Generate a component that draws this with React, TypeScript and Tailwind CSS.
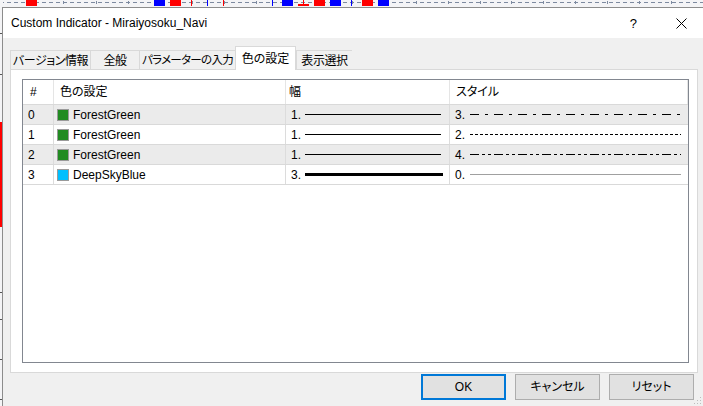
import React from "react";

type Row = {
  id: number;
  color: string;
  name: string;
  width: number;
  style: number;
  dash: string;
};

const rows: Row[] = [
  { id: 0, color: "#228b22", name: "ForestGreen", width: 1, style: 3, dash: "9 6 3 6" },
  { id: 1, color: "#228b22", name: "ForestGreen", width: 1, style: 2, dash: "3 2" },
  { id: 2, color: "#228b22", name: "ForestGreen", width: 1, style: 4, dash: "9 3 3 3 3 3" },
  { id: 3, color: "#00bfff", name: "DeepSkyBlue", width: 3, style: 0, dash: "" },
];

const markers = [
  { x: 26, w: 11, c: "#ff0000", y: 0 },
  { x: 154, w: 11, c: "#0000ff", y: 0 },
  { x: 170, w: 11, c: "#ff0000", y: 0 },
  { x: 191, w: 1, c: "#ff0000", y: 0 },
  { x: 207, w: 1, c: "#0000ff", y: 0 },
  { x: 223, w: 1, c: "#ff0000", y: 0 },
  { x: 272, w: 1, c: "#0000ff", y: 0 },
  { x: 282, w: 11, c: "#0000ff", y: 0 },
  { x: 303, w: 1, c: "#ff0000", y: 0 },
  { x: 298, w: 11, c: "#ff0000", y: 4 },
  { x: 314, w: 11, c: "#ff0000", y: 0 },
  { x: 330, w: 11, c: "#0000ff", y: 0 },
  { x: 351, w: 1, c: "#0000ff", y: 0 },
  { x: 362, w: 11, c: "#ff0000", y: 0 },
  { x: 378, w: 11, c: "#0000ff", y: 0 },
];

const ticks = [63, 96, 128, 160, 192, 224, 256, 288, 320, 352, 384, 416, 448, 480, 511, 543, 575, 607, 639, 671];

function ChartStrip() {
  return (
    <svg width="703" height="8" className="absolute left-0 top-0">
      <rect x="0" y="0" width="703" height="8" fill="#f4f4f6" />
      <line x1="0" y1="2.5" x2="703" y2="2.5" stroke="#7d8aa0" strokeDasharray="4 3" />
      {ticks.map((t) => (
        <line key={t} x1={t + 0.5} y1="1" x2={t + 0.5} y2="4" stroke="#7d8aa0" />
      ))}
      {markers.map((m, i) => (
        <rect key={i} x={m.x} y={m.y} width={m.w} height={6 - m.y} fill={m.c} />
      ))}
    </svg>
  );
}

function LeftStrip() {
  return (
    <svg width="3" height="406" className="absolute left-0 top-0">
      <rect x="0" y="0" width="3" height="406" fill="#f4f4f6" />
      <rect x="0" y="122" width="2" height="105" fill="#ff0000" />
      {[33, 74, 292, 319, 359, 399].map((y) => (
        <line key={y} x1="0" y1={y + 0.5} x2="2" y2={y + 0.5} stroke="#555" />
      ))}
    </svg>
  );
}

function WidthLine({ w }: { w: number }) {
  const len = w === 3 ? 138 : 136;
  return (
    <svg width={len} height="5" className="block">
      <line x1="0" y1="2.5" x2={len} y2="2.5" stroke="#000" strokeWidth={w} />
    </svg>
  );
}

function StyleLine({ dash }: { dash: string }) {
  return (
    <svg width="211" height="5" className="block">
      <line
        x1="0"
        y1="2.5"
        x2="211"
        y2="2.5"
        stroke={dash ? "#000" : "#a0a0a0"}
        strokeWidth="1"
        strokeDasharray={dash || undefined}
      />
    </svg>
  );
}

const tabs = [
  { label: "バージョン情報", w: "w-[80px]", active: false, tight: false },
  { label: "全般", w: "w-[49px]", active: false, tight: false },
  { label: "パラメーターの入力", w: "w-[96px]", active: false, tight: true },
  { label: "色の設定", w: "w-[61px]", active: true, tight: false },
  { label: "表示選択", w: "w-[56px]", active: false, tight: false },
];

export default function App() {
  return (
    <div
      className="relative h-[406px] w-[703px] overflow-hidden bg-white text-[12px] leading-none text-black [font-feature-settings:'palt']"
      style={{ fontFamily: '"Liberation Sans", "Noto Sans CJK JP", sans-serif' }}
    >
      <ChartStrip />
      <LeftStrip />

      <div className="absolute left-[2px] top-[7px] flex h-[399px] w-[701px] flex-col border-l border-t border-[#8c8c8c] bg-[#f0f0f0]">
        {/* title bar */}
        <div className="flex h-[30px] shrink-0 items-center bg-white pl-[8px]">
          <span className="text-[12px]">Custom Indicator - Miraiyosoku_Navi</span>
          <span className="ml-auto mr-[39px] text-[13px]">?</span>
          <svg width="11" height="11" className="mr-[16px]">
            <path d="M0.5 0.5 L10.5 10.5 M10.5 0.5 L0.5 10.5" stroke="#000" strokeWidth="1" />
          </svg>
        </div>

        {/* body */}
        <div className="flex flex-1 flex-col pl-[7px] pt-[8px]">
          <div className="relative z-10 flex h-[23px] items-end">
            {tabs.map((t) =>
              t.active ? (
                <div
                  key={t.label}
                  className={`${t.w} -mb-px flex h-[24px] items-center justify-center whitespace-nowrap border border-b-0 border-[#d9d9d9] bg-white`}
                >
                  {t.label}
                </div>
              ) : (
                <div
                  key={t.label}
                  className={`${t.w} flex h-[19px] items-center justify-center whitespace-nowrap border border-b-0 border-r-0 border-[#d9d9d9] bg-[#f0f0f0] pt-[1px] ${
                    t.tight ? "text-[11.5px] tracking-[-0.7px]" : "tracking-[-0.4px]"
                  }`}
                >
                  {t.label}
                </div>
              )
            )}
          </div>

          <div className="h-[304px] w-[688px] border border-[#d9d9d9] bg-white pl-[11px] pt-[9px]">
            <div className="h-[284px] w-[667px] border border-[#828790] bg-white">
              {/* header */}
              <div className="grid h-[25px] grid-cols-[31px_232px_164px_238px] border-b border-[#d9d9d9]">
                <div className="flex items-center border-r border-[#e5e5e5] pl-[7px]">#</div>
                <div className="flex items-center border-r border-[#e5e5e5] pl-[6px]">色の設定</div>
                <div className="flex items-center border-r border-[#e5e5e5] pl-[3px]">幅</div>
                <div className="flex items-center border-r border-[#e5e5e5] pl-[6px]">スタイル</div>
              </div>

              {rows.map((r) => (
                <div
                  key={r.id}
                  className={`grid h-[20px] grid-cols-[31px_232px_164px_238px] border-b border-[#d9d9d9] ${
                    r.id % 2 === 0 ? "bg-[#ebebeb]" : "bg-white"
                  }`}
                >
                  <div className="flex items-center border-r border-[#dcdcdc] pl-[5px]">{r.id}</div>
                  <div className="flex items-center border-r border-[#dcdcdc] pl-[3px]">
                    <span
                      className="mr-[4px] inline-block h-[12px] w-[12px] border border-[#9a9a9a]"
                      style={{ backgroundColor: r.color }}
                    />
                    {r.name}
                  </div>
                  <div className="flex items-center gap-[4px] border-r border-[#dcdcdc] pl-[5px]">
                    <span>{r.width}.</span>
                    <WidthLine w={r.width} />
                  </div>
                  <div className="flex items-center gap-[5px] pl-[5px]">
                    <span>{r.style}.</span>
                    <StyleLine dash={r.dash} />
                  </div>
                </div>
              ))}
            </div>
          </div>

          {/* buttons */}
          <div className="mt-[1px] flex justify-end gap-[9px] pr-[9px]">
            <button className="flex h-[26px] w-[85px] items-center justify-center border-2 border-[#0078d7] bg-[#e1e1e1]">
              OK
            </button>
            <button className="flex h-[26px] w-[85px] items-center justify-center border border-[#adadad] bg-[#e1e1e1]">
              キャンセル
            </button>
            <button className="flex h-[26px] w-[85px] items-center justify-center border border-[#adadad] bg-[#e1e1e1]">
              リセット
            </button>
          </div>
        </div>

        <svg width="8" height="8" className="absolute bottom-[1px] right-[1px]">
          {[
            [6, 0],
            [6, 3],
            [3, 3],
            [6, 6],
            [3, 6],
            [0, 6],
          ].map(([x, y], i) => (
            <rect key={i} x={x} y={y} width="1" height="1" fill="#bdbdbd" />
          ))}
        </svg>
      </div>
    </div>
  );
}
